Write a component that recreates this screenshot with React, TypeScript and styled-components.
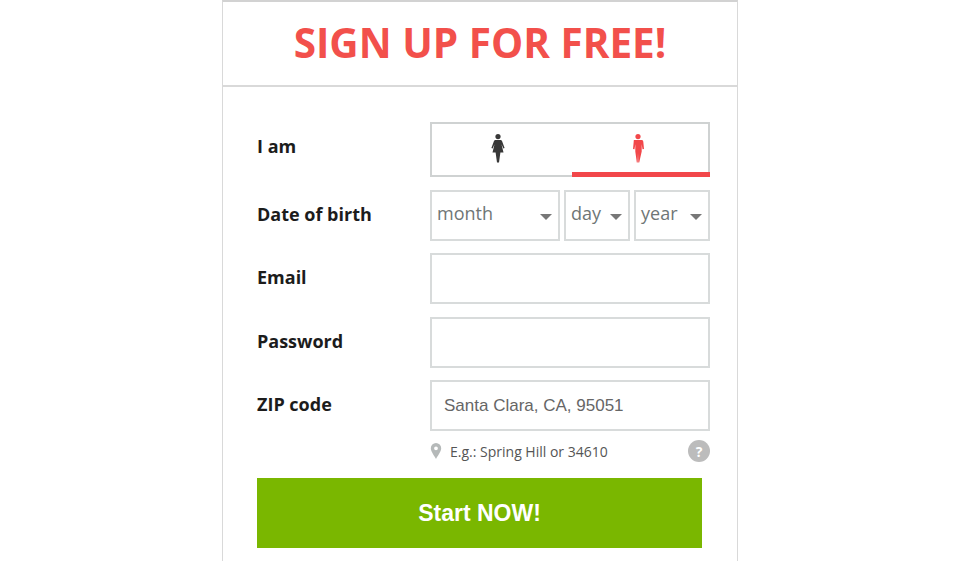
import React from 'react'
import styled, { createGlobalStyle } from 'styled-components'

const GlobalStyle = createGlobalStyle`
  html, body {
    margin: 0;
    padding: 0;
    height: 561px;
    overflow: hidden;
    background: #fff;
    font-family: "Open Sans", "Liberation Sans", sans-serif;
  }
`

const Card = styled.div`
  box-sizing: border-box;
  width: 516px;
  height: 561px;
  margin: 0 auto;
  border: 1px solid #d9d9d9;
  border-top: 2px solid #d2d2d2;
  border-bottom: 0;
`

const Header = styled.div`
  box-sizing: border-box;
  height: 85px;
  border-bottom: 2px solid #d9d9d9;
  display: flex;
  align-items: center;
  justify-content: center;
`

const Title = styled.h1`
  margin: 0 0 2px;
  color: #f2504b;
  font-size: 40.5px;
  font-weight: 700;
  line-height: 82px;
`

const Form = styled.form`
  padding: 35px 27px 0 34px;
  display: flex;
  flex-direction: column;
`

const Row = styled.div<{ $gap?: number }>`
  display: grid;
  grid-template-columns: 173px 280px;
  align-items: center;
  margin-bottom: ${p => p.$gap ?? 12}px;
`

const Label = styled.label<{ $up?: number }>`
  color: #1c1c1c;
  font-size: 18px;
  font-weight: 700;
  line-height: 24px;
  margin-top: -${p => p.$up ?? 3}px;
`

const GenderBox = styled.div`
  box-sizing: border-box;
  height: 55px;
  border: 2px solid #cfd2d2;
  display: flex;
`

const GenderOption = styled.div<{ $active?: boolean }>`
  flex: 1;
  display: flex;
  align-items: center;
  justify-content: center;
  padding: 0 ${p => (p.$active ? 6 : 8)}px 0 0;
  margin-bottom: -2px;
  margin-right: ${p => (p.$active ? '-2px' : '0')};
  border-bottom: 5px solid ${p => (p.$active ? '#f2474a' : 'transparent')};
  color: ${p => (p.$active ? '#f2474a' : '#383838')};
`

const DateRow = styled.div`
  display: flex;
  gap: 4px;
`

const Select = styled.div<{ $width: number }>`
  box-sizing: border-box;
  width: ${p => p.$width}px;
  height: 51px;
  border: 2px solid #d8dbdb;
  padding: 0 6px 5px 5px;
  display: flex;
  align-items: center;
  justify-content: space-between;
  color: #6f7676;
  font-size: 18px;
`

const Caret = styled.span`
  width: 0;
  height: 0;
  margin-top: 8px;
  border-left: 6px solid transparent;
  border-right: 6px solid transparent;
  border-top: 6px solid #777;
`

const Input = styled.input`
  box-sizing: border-box;
  width: 280px;
  height: 51px;
  border: 2px solid #d8dbdb;
  border-radius: 0;
  outline: none;
  padding: 0 12px 0;
  background: #fff;
  color: #666;
  font-family: "Liberation Sans", Arial, sans-serif;
  font-size: 17px;
`

const Hint = styled.div`
  margin: 8px 0 15px 173px;
  width: 280px;
  height: 24px;
  display: flex;
  align-items: center;
  color: #555;
  font-size: 14px;
`

const HintText = styled.span`
  margin-left: 8px;
  flex: 1;
`

const Help = styled.span`
  width: 22px;
  height: 22px;
  border-radius: 50%;
  background: #bcbcbc;
  color: #fff;
  font-size: 14px;
  font-weight: 700;
  display: flex;
  align-items: center;
  justify-content: center;
`

const Submit = styled.button`
  width: 445px;
  height: 70px;
  border: 0;
  padding: 0;
  background: #7ab700;
  color: #fff;
  font-family: "Liberation Sans", Arial, sans-serif;
  font-size: 23px;
  font-weight: 700;
`

const Woman = () => (
  <svg width="14" height="29" viewBox="0 0 14 29" fill="currentColor">
    <circle cx="7" cy="2.6" r="2.6" />
    <path d="M4.6 6h4.8c.9 0 1.500.6 1.800 1.400L13.600 14l-1.200.5-1.900-4.200 2 8.200H9.400L8 28.400H6L4.600 18.500H1.500l2-8.200-1.900 4.200L.4 14l2.400-6.600C3.100 6.600 3.700 6 4.600 6z" />
  </svg>
)

const Man = () => (
  <svg width="12" height="29" viewBox="0 0 12 29" fill="currentColor">
    <circle cx="6" cy="2.6" r="2.6" />
    <path d="M2.500 6h7c1 0 1.700.7 1.800 1.700l.7 7.300-1.500.2-.8-5v7.300L7.200 28.400H6.300L6 19l-.3 9.400h-.9L3.300 17.500v-7.300l-.8 5L1 15l.7-7.300C1.800 6.700 1.500 6 2.500 6z" />
  </svg>
)

const Pin = () => (
  <svg width="12" height="16" viewBox="0 0 12 16" fill="#b5b9b9">
    <path fillRule="evenodd" d="M6 0a5.200 5.200 0 0 1 5.200 5.200C11.200 8.600 7.500 13 6 16 4.500 13 .8 8.600.8 5.200A5.200 5.200 0 0 1 6 0zm0 3.400a1.900 1.900 0 1 0 0 3.800 1.900 1.900 0 0 0 0-3.800z" />
  </svg>
)

const App = () => (
  <>
    <GlobalStyle />
    <Card>
      <Header>
        <Title>SIGN UP FOR FREE!</Title>
      </Header>
      <Form>
        <Row $gap={13}>
          <Label $up={7}>I am</Label>
          <GenderBox>
            <GenderOption><Woman /></GenderOption>
            <GenderOption $active><Man /></GenderOption>
          </GenderBox>
        </Row>
        <Row>
          <Label>Date of birth</Label>
          <DateRow>
            <Select $width={130}>month<Caret /></Select>
            <Select $width={66}>day<Caret /></Select>
            <Select $width={76}>year<Caret /></Select>
          </DateRow>
        </Row>
        <Row $gap={13}>
          <Label>Email</Label>
          <Input type="email" />
        </Row>
        <Row $gap={12}>
          <Label>Password</Label>
          <Input type="password" />
        </Row>
        <Row $gap={0}>
          <Label>ZIP code</Label>
          <Input defaultValue="Santa Clara, CA, 95051" />
        </Row>
        <Hint>
          <Pin />
          <HintText>E.g.: Spring Hill or 34610</HintText>
          <Help>?</Help>
        </Hint>
        <Submit type="button">Start NOW!</Submit>
      </Form>
    </Card>
  </>
)

export default App
